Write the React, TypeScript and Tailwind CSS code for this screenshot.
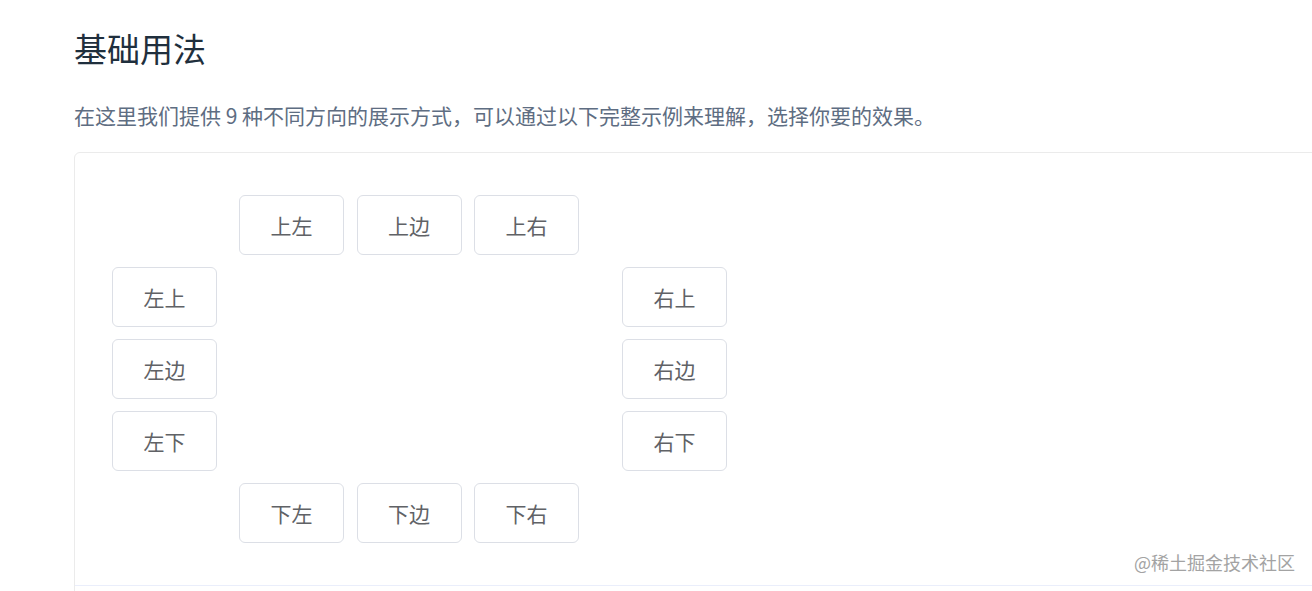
const cjk = { fontFamily: '"Noto Sans CJK SC", "Noto Sans", sans-serif' };

function Item({ label }: { label: string }) {
  return (
    <button
      type="button"
      className="w-[105px] h-[60px] shrink-0 bg-white border border-[#dcdfe6] rounded-[6px] text-[21px] leading-none text-[#606266] flex items-center justify-center"
    >
      {label}
    </button>
  );
}

export default function App() {
  const top = ['上左', '上边', '上右'];
  const left = ['左上', '左边', '左下'];
  const right = ['右上', '右边', '右下'];
  const bottom = ['下左', '下边', '下右'];

  return (
    <div className="relative w-[1312px] h-[591px] overflow-hidden bg-white" style={cjk}>
      <div className="pl-[74px] pt-[26px]">
        <h3 className="text-[33px] leading-[45px] font-normal text-[#1f2f3d]">基础用法</h3>
        <p className="mt-[28px] text-[21px] leading-[32px] text-[#5e6d82]">
          在这里我们提供 9 种不同方向的展示方式，可以通过以下完整示例来理解，选择你要的效果。
        </p>
        <div className="mt-[21px] w-[1300px] border border-[#ebebeb] rounded-[6px]">
          <div className="pl-[37px] pt-[42px] pb-[42px]">
            <div className="flex gap-[12.5px] pl-[127px]">
              {top.map((t) => (
                <Item key={t} label={t} />
              ))}
            </div>
            <div className="flex gap-[405px] mt-3">
              <div className="flex flex-col gap-3">
                {left.map((t) => (
                  <Item key={t} label={t} />
                ))}
              </div>
              <div className="flex flex-col gap-3">
                {right.map((t) => (
                  <Item key={t} label={t} />
                ))}
              </div>
            </div>
            <div className="flex gap-[12.5px] pl-[127px] mt-3">
              {bottom.map((t) => (
                <Item key={t} label={t} />
              ))}
            </div>
          </div>
          <div className="h-[60px] border-t border-[#eaeefb]" />
        </div>
      </div>
      <div className="absolute right-[17px] top-[549px] text-[18px] leading-[26px] text-[#a3a3a3]">
        @稀土掘金技术社区
      </div>
    </div>
  );
}
